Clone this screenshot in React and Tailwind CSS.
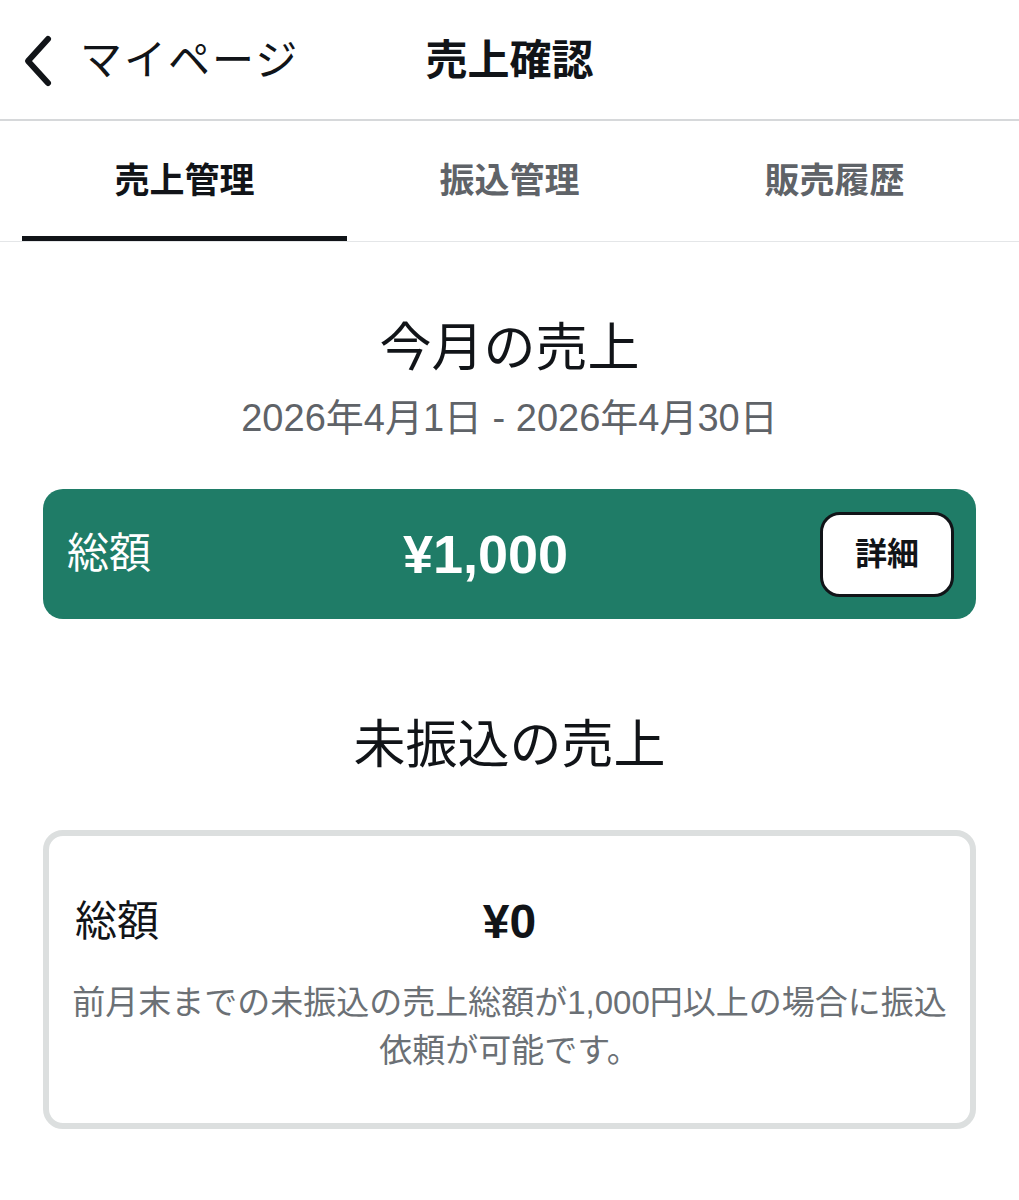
import React, { useState } from 'react';

const tabs = ['売上管理', '振込管理', '販売履歴'];

const ChevronLeft = () => (
    <svg width="34" height="54" viewBox="0 0 34 54" fill="none">
        <path d="M28 5 L8 27 L28 49" stroke="#111418" strokeWidth="6" strokeLinecap="round" strokeLinejoin="round" />
    </svg>
);

const App = () => {
    const [active, setActive] = useState(0);

    return (
        <div className="w-[1019px] min-h-[1200px] bg-white text-[#111418] font-['Liberation_Sans','Noto_Sans_CJK_JP',sans-serif]">
            {/* Header */}
            <div className="h-[121px] grid grid-cols-[1fr_auto_1fr] items-center border-b-2 border-[#d6d8da] px-[20px]">
                <button className="flex items-center gap-[26px] pt-[2px]">
                    <ChevronLeft />
                    <span className="text-[42px] leading-none tracking-[2px]">マイページ</span>
                </button>
                <h1 className="text-[42px] font-bold leading-none pt-[3px]">売上確認</h1>
                <div />
            </div>

            {/* Tabs */}
            <div className="h-[121px] px-[22px] grid grid-cols-3 border-b border-[#e4e6e8]">
                {tabs.map((t, i) => (
                    <button
                        key={t}
                        onClick={() => setActive(i)}
                        className={
                            i === active
                                ? 'flex items-center justify-center text-[35px] font-bold text-[#111418] border-b-[5px] border-[#111418] pt-[5px]'
                                : 'flex items-center justify-center text-[35px] font-bold text-[#5f6368] border-b-[5px] border-transparent pt-[5px]'
                        }
                    >
                        {t}
                    </button>
                ))}
            </div>

            <div className="px-[43px] pb-[72px]">
                {/* This month */}
                <h2 className="mt-[72px] text-center text-[52px] leading-[68px]">今月の売上</h2>
                <p className="mt-[12px] text-center text-[38px] leading-[48px] text-[#5f6368]">2026年4月1日 - 2026年4月30日</p>

                <div className="mt-[47px] h-[130px] rounded-[20px] bg-[#1f7c67] flex items-center pl-[24px] pr-[22px]">
                    <span className="text-[42px] text-white leading-none">総額</span>
                    <span className="flex-1 text-center text-[54px] font-bold text-white leading-none">¥1,000</span>
                    <button className="w-[134px] h-[85px] rounded-[20px] bg-white border-[3px] border-[#111418] text-[32px] font-bold">
                        詳細
                    </button>
                </div>

                {/* Untransferred */}
                <h2 className="mt-[92px] text-center text-[52px] leading-[68px]">未振込の売上</h2>

                <div className="mt-[51px] rounded-[20px] border-[6px] border-[#dcdfdf] pt-[58px] pb-[48px]">
                    <div className="grid grid-cols-3 items-center px-[26px]">
                        <span className="text-[42px] leading-[56px]">総額</span>
                        <span className="text-center text-[48px] font-bold leading-[56px]">¥0</span>
                        <span />
                    </div>
                    <p className="mt-[29px] text-center text-[33px] leading-[48px] text-[#6b7075] whitespace-nowrap">
                        前月末までの未振込の売上総額が1,000円以上の場合に振込
                        <br />
                        依頼が可能です。
                    </p>
                </div>
            </div>
        </div>
    );
};

export default App;
